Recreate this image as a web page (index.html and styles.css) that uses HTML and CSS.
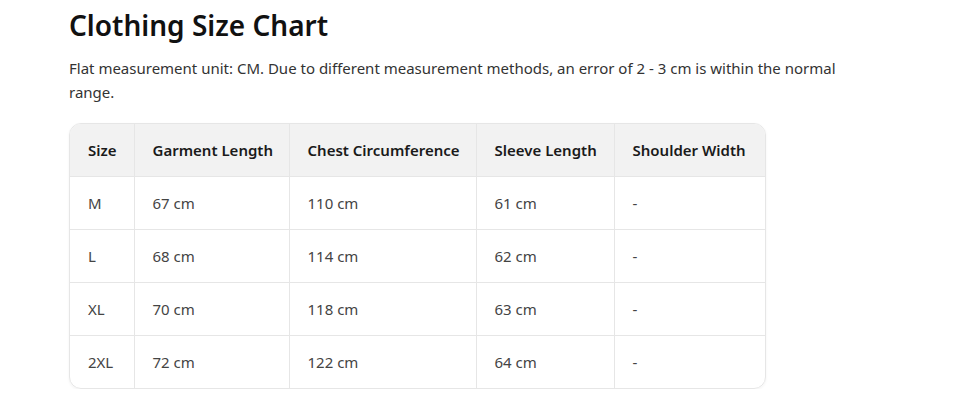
FILE: index.html
```html
<!DOCTYPE html>
<html lang="en">
<head>
<meta charset="utf-8">
<title>Clothing Size Chart</title>
<link rel="stylesheet" href="styles.css">
</head>
<body>
<main class="page">
  <h1 class="title">Clothing Size Chart</h1>
  <p class="note">Flat measurement unit: CM. Due to different measurement methods, an error of 2 - 3 cm is within the normal range.</p>
  <div class="table-wrap">
    <table class="size-table">
      <colgroup>
        <col class="c1"><col class="c2"><col class="c3"><col class="c4"><col class="c5">
      </colgroup>
      <thead>
        <tr><th>Size</th><th>Garment Length</th><th>Chest Circumference</th><th>Sleeve Length</th><th>Shoulder Width</th></tr>
      </thead>
      <tbody>
        <tr><td>M</td><td>67 cm</td><td>110 cm</td><td>61 cm</td><td>-</td></tr>
        <tr><td>L</td><td>68 cm</td><td>114 cm</td><td>62 cm</td><td>-</td></tr>
        <tr><td>XL</td><td>70 cm</td><td>118 cm</td><td>63 cm</td><td>-</td></tr>
        <tr><td>2XL</td><td>72 cm</td><td>122 cm</td><td>64 cm</td><td>-</td></tr>
      </tbody>
    </table>
  </div>
</main>
</body>
</html>
```
FILE: styles.css
```css
html, body {
  margin: 0;
  padding: 0;
  background: #ffffff;
}
body {
  font-family: "Noto Sans", "Open Sans", sans-serif;
  color: #333333;
}
.page {
  width: 825px;
  margin: 0 auto;
  padding-top: 8px;
}
.title {
  font-family: "Noto Sans", "Open Sans", sans-serif;
  font-weight: 600;
  font-size: 28px;
  line-height: 34px;
  color: #111111;
  margin: 0 0 14px 0;
}
.note {
  max-width: 790px;
  font-size: 15px;
  line-height: 24px;
  color: #333333;
  margin: 0 0 19px 0;
}
.table-wrap {
  width: 695px;
  border: 1px solid #e6e6e6;
  border-radius: 12px;
  overflow: hidden;
  box-shadow: 0 1px 3px rgba(0,0,0,0.05);
}
.size-table {
  width: 100%;
  border-collapse: collapse;
  table-layout: fixed;
  font-size: 15px;
}
.c1 { width: 64px; }
.c2 { width: 155px; }
.c3 { width: 187px; }
.c4 { width: 138px; }
.c5 { width: auto; }
.size-table th,
.size-table td {
  height: 52px;
  padding: 0 0 0 18px;
  text-align: left;
  border-right: 1px solid #e6e6e6;
  border-bottom: 1px solid #e6e6e6;
}
.size-table th:last-child,
.size-table td:last-child {
  border-right: none;
}
.size-table tbody tr:last-child td {
  border-bottom: none;
}
.size-table th {
  background: #f2f2f2;
  font-weight: 600;
  color: #1a1a1a;
}
.size-table td {
  color: #444444;
  font-weight: 400;
}
```
